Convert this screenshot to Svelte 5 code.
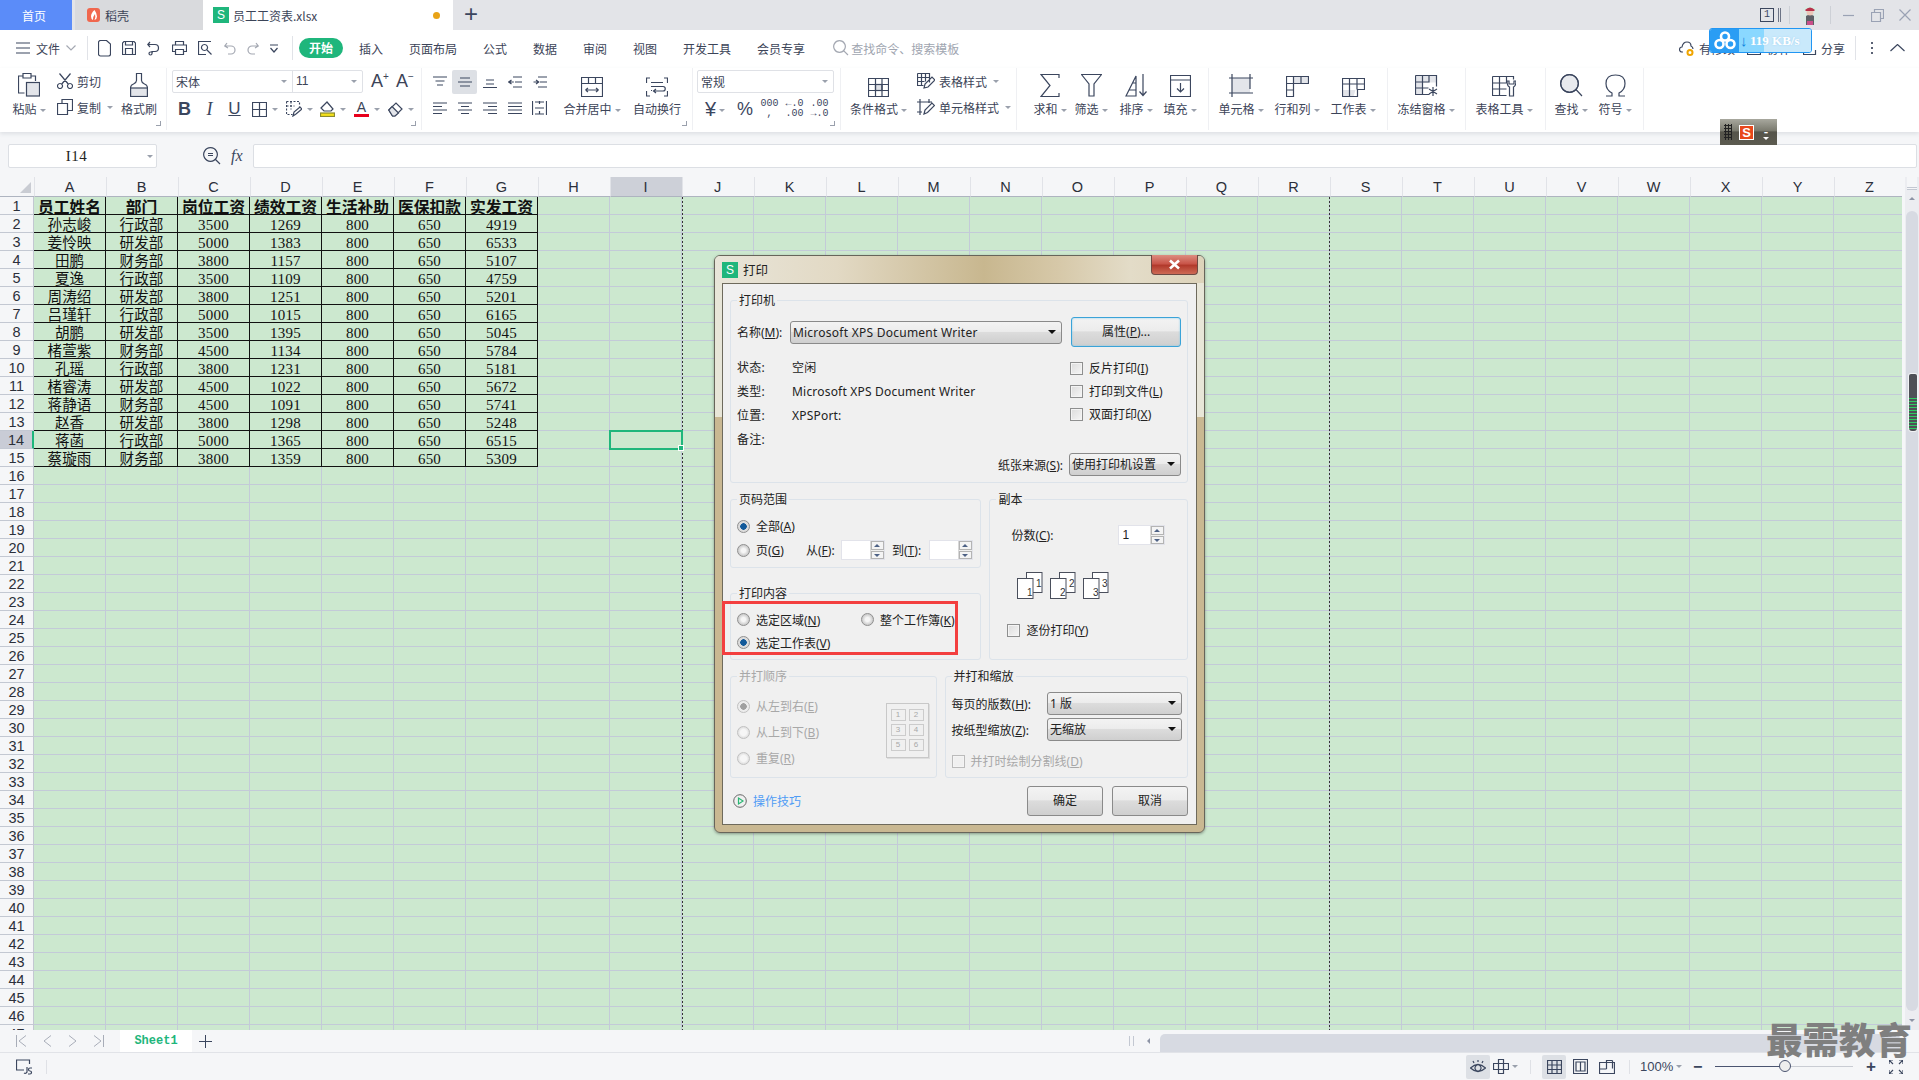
<script>
  const colLetters = 'ABCDEFGHIJKLMNOPQRSTUVWXYZ'.split('');
  const head = ['员工姓名', '部门', '岗位工资', '绩效工资', '生活补助', '医保扣款', '实发工资'];
  const people = [
    ['孙志峻', '行政部', 3500, 1269, 4919],
    ['姜怜映', '研发部', 5000, 1383, 6533],
    ['田鹏', '财务部', 3800, 1157, 5107],
    ['夏逸', '行政部', 3500, 1109, 4759],
    ['周涛绍', '研发部', 3800, 1251, 5201],
    ['吕瑾轩', '行政部', 5000, 1015, 6165],
    ['胡鹏', '研发部', 3500, 1395, 5045],
    ['楮萱紫', '财务部', 4500, 1134, 5784],
    ['孔瑶', '行政部', 3800, 1231, 5181],
    ['楮睿涛', '研发部', 4500, 1022, 5672],
    ['蒋静语', '财务部', 4500, 1091, 5741],
    ['赵香', '研发部', 3800, 1298, 5248],
    ['蒋菡', '行政部', 5000, 1365, 6515],
    ['蔡璇雨', '财务部', 3800, 1359, 5309]
  ];
  const rowNums = Array.from({ length: 47 }, (_, i) => i + 1);

  function cellAt(row, col) {
    if (row === 1 && col < 7) return head[col];
    const p = people[row - 2];
    if (!p || col > 6) return '';
    return [p[0], p[1], p[2], p[3], 800, 650, p[4]][col];
  }

  const icons = {
    menu: 'M0 1h14M0 6h14M0 11h14',
    chev: 'M.5.5 5 5l4.5-4.5',
    up: 'M.5 7 7.5.5 14.5 7',
    newdoc: 'M2.5.5h6l4 3.5v10a2 2 0 0 1-2 2h-8a2 2 0 0 1-2-2v-11.500a2 2 0 0 1 2-2z',
    save: 'M2 .5h10l1.500 1.500v11.500h-13v-11.500zM3.500.5v3.500h7v-3.500M3.500 13.500v-6h7v6',
    saveas: 'M1 3.500h7a3.500 3.500 0 0 1 0 7H5v2a1.500 1.500 0 1 1-1.500-1.500H6M3 1 .8 3.500 3 6',
    print: 'M3.500 4V.5h8V4M3.500 10.500h-3V4h14v6.500h-3M3.500 8.500h8v5h-8z',
    preview: 'M13 .5H.5v13H8M7 .5M6.500 3.500a3 3 0 1 0 .01 0M9 9l4.500 4.500',
    undo: 'M3 1 .8 4 4 6M1 4h6a4 4 0 0 1 0 8H4',
    redo: 'M9 1l2.200 3L8 6M11 4H5a4 4 0 0 0 0 8h3',
    more: 'M0 1h8M.5 4 4 8l3.500-4',
    search: 'M6.500.7a5.800 5.800 0 1 0 .01 0M10.800 10.800 15 15',
    cut: 'M4.800 11 13.500.5M11.200 11 2.500.5M3 10.500a2.500 2.500 0 1 0 .01 0M13 10.500a2.500 2.500 0 1 0 .01 0',
    copy: 'M5 4V.5h10.500v11H11M.5 4.500h10v11H.5z',
    borders: 'M.5.5h14v14H.5zM7.500.5v14M.5 7.500h14',
    zoomf: 'M7.500.7a6.800 6.800 0 1 0 .01 0M12.500 12.500 17 17M5 6.500h5M5 8.500h5',
    merge: 'M.5.5h21v19H.5zM.5 6.500h21M7.500.5v6M14.500.5v6M4.500 13h13M4.500 13l2.500-2M4.500 13l2.500 2M17.500 13 15 11M17.500 13 15 15',
    wrap: 'M4 1H.5v5M18 1h3.500v5M4 19H.5v-5M18 19h3.500v-5M5 5.500h12M5 9.500h12a2 2 0 0 1 0 4.500H8M10 12l-2.500 2 2.500 2M5 13.500h1',
    indL: 'M14 1H5M14 6h-7M14 11H5M3.500 4 .8 6l2.700 2M.8 6h5',
    indR: 'M14 1H5M14 6h-7M14 11H5M3 4l2.700 2L3 8M.5 6h5',
    distV: 'M.5 0v14M14.500 0v14M3 1h9M3 7h9M3 13h9M7.500 0v3M7.500 10v3',
    sum: 'M19 4V.5H1l9 11-9 11h18V19',
    filter: 'M.5.5h20L13 10v12H8V10z',
    sort: 'M1 22 11 2v20zM4 16h7M7 9h4M18 0v21M14.500 17.500 18 21.500 21.500 17.500',
    fill: 'M.5.5h20v21H.5zM.5 5h20M10.500 8v9M7 13.500 10.500 17 14 13.500',
    cells: 'M0 4h24M0 19h24M3 0v23M21 0v15',
    rowcol: 'M.5.5h22v7H.5zM.5 7.500v13h7v-20M7.500.5v7M15 .5v7M.5 14h7',
    sheet: 'M.5.5h22v11h-7v7h-15zM.5 6h22M7.500.5v18M15 .5v11',
    freeze: 'M.5.5h21v11M.5.5v19h14M.5 7h13M.5 13h13M7.500.5v19M14 .5v7M18 12v9M14 14l8 5M22 14l-8 5',
    tools: 'M.5.5h21v3M.5.5v19h14M.5 7h14M.5 13h14M7.500.5v19M14.500.5v6M15 5q0 5 2.500 6v9h4v-9q2.500-1 2.500-6l-2 0v3h-5V5z',
    find: 'M9.500.7a8.800 8.800 0 1 0 .01 0M15.500 15 22 22',
    omega: 'M1 22h6v-3Q1 16 1 9.500 1 1 10.500 1T20 9.500Q20 16 14 19v3h6',
    clip: 'M5 3H.5v17h6M5 .5h8V5H5zM13 3h4.500v5',
    cond: 'M.5.5h20v18H.5zM.5 6.500h20M.5 12.500h20M7.500.5v18M14 .5v18',
    tstyle: 'M.5.5h12v9M.5.5v12h6M.5 4.500h12M.5 8.500h7M4.500.5v12M8.500.5v8M7 15l1-4 7-7 3 3-7 7z',
    cstyle: 'M0 3h15M3 0v16M12 0v4M7 15l1-4 7-7 2.500 2.500-7 7zM0 13h5'
  };
</script>

{#snippet ic(name, w, h, cls = '')}
  <svg class="ic {cls}" width={w} height={h} viewBox="0 0 {w} {h}"><path d={icons[name]} /></svg>
{/snippet}

{#snippet lines(d, w = 14, h = 12)}
  <svg class="ic" width={w} height={h} viewBox="0 0 {w} {h}"><path d={d} /></svg>
{/snippet}

{#snippet big(name, w, h, label, width, caret = true)}
  <div class="big w{width}">
    <div class="bigicon">{@render ic(name, w, h)}</div>
    <div class="biglabel">{label}{#if caret}<i class="caret"></i>{/if}</div>
  </div>
{/snippet}

{#snippet corner()}
  <span class="launcher"></span>
{/snippet}

{#snippet radio(on = false, off = false)}
  <span class="radio" class:on class:off></span>
{/snippet}

{#snippet check(off = false)}
  <span class="check" class:off></span>
{/snippet}

{#snippet spin(v = '')}
  <span class="spin"><span class="spinval">{v}</span><span class="spinbtns"><b class="su"></b><b class="sd"></b></span></span>
{/snippet}

{#snippet pages(n)}
  <svg class="pages" width="26" height="27" viewBox="0 0 26 27">
    <rect x="9.500" y=".5" width="15.500" height="20" />
    <rect x=".5" y="6.500" width="15.500" height="20" />
    <text x="19" y="15">{n}</text>
    <text x="10" y="24">{n}</text>
  </svg>
{/snippet}

<div class="app">
  <header class="tabbar">
    <div class="tab home">首页</div>
    <div class="tab docer">
      <svg width="13" height="14" viewBox="0 0 13 14"><rect width="13" height="14" rx="3" fill="#f0674e" /><path d="M7.500 2Q4 5 4 8.500 4 11 6 12q-.5-3 2-6 1 3-.5 6 2.500-1 2.500-3.500 0-3-2.500-6.500z" fill="#fff" /></svg>
      <span>稻壳</span>
    </div>
    <div class="tab active">
      <span class="sicon">S</span>
      <span class="fname">员工工资表.xlsx</span>
      <span class="dot"></span>
    </div>
    <div class="addtab">+</div>
    <div class="winctl">
      <span class="pagecount"><em>1</em></span>
      <span class="wsep"></span>
      <svg class="avatar" width="20" height="20" viewBox="0 0 20 20">
        <circle cx="10" cy="10" r="10" fill="#dbe9e4" />
        <path d="M6 20V11q4-3 8 0v9z" fill="#5d6166" />
        <circle cx="10" cy="7" r="3.500" fill="#e8c9b8" />
        <path d="M5 5q5-5 10 0l-1 1H6z" fill="#b8324a" />
        <path d="M7 20v-4h6v4z" fill="#c94f8a" />
      </svg>
      <span class="wsep s2"></span>
      <svg class="wc" width="11" height="11" viewBox="0 0 11 11"><path d="M0 5.500h11" /></svg>
      <svg class="wc gap1" width="13" height="13" viewBox="0 0 13 13"><path d="M.5 3.500h9v9h-9zM3.500 3.500v-3h9v9h-3" /></svg>
      <svg class="wc gap2" width="12" height="12" viewBox="0 0 12 12"><path d="M.5.5l11 11M11.500.5l-11 11" /></svg>
    </div>
  </header>

  <nav class="menubar">
    <div class="filemenu">
      {@render ic('menu', 14, 12)}
      <span>文件</span>
      {@render ic('chev', 10, 6, 'soft')}
    </div>
    <span class="msep"></span>
    <div class="quick">
      {@render ic('newdoc', 13, 17)}
      {@render ic('save', 14, 14)}
      {@render ic('saveas', 14, 15)}
      {@render ic('print', 15, 14)}
      {@render ic('preview', 15, 14)}
      {@render ic('undo', 12, 13, 'soft')}
      {@render ic('redo', 12, 13, 'soft')}
      {@render ic('more', 8, 9)}
    </div>
    <span class="msep"></span>
    <div class="pill">开始</div>
    <div class="mitems">
      <span>插入</span><span>页面布局</span><span>公式</span><span>数据</span><span>审阅</span><span>视图</span><span>开发工具</span><span>会员专享</span>
    </div>
    <div class="msearch">{@render ic('search', 16, 16, 'soft')}<span>查找命令、搜索模板</span></div>
    <div class="mright">
      <svg class="ic" width="15" height="15" viewBox="0 0 15 15"><path d="M4 11H3a2.500 2.500 0 0 1 0-5q1-5 5-5t4 4q2 1 2 3" /><circle cx="11" cy="11.500" r="2.500" stroke="#f0a500" stroke-width="2" /></svg>
      <span class="mr1">有修改</span>
      <svg class="ic mr2" width="14" height="14" viewBox="0 0 14 14"><path d="M.5 4v9.500h13V7" /></svg>
      <span class="mr3">协作</span>
      <svg class="ic mr4" width="14" height="14" viewBox="0 0 14 14"><path d="M.5 4v9.500h12V9" /></svg>
      <span class="mr5">分享</span>
      <span class="msep mr6"></span>
      <span class="vdots"><b></b><b></b><b></b></span>
      {@render ic('up', 15, 8)}
    </div>
  </nav>

  <section class="ribbon">
    <div class="group g1">
      <div class="big w40">
        <div class="bigicon">
          <svg class="ic" width="22" height="24" viewBox="0 0 22 24"><path d={icons.clip} /><rect x="8.500" y="9.500" width="13" height="13.500" fill="#e3e5ea" /></svg>
        </div>
        <div class="biglabel">粘贴<i class="caret"></i></div>
      </div>
      <div class="smalls s55">
        <div class="small">{@render ic('cut', 16, 16)}<span>剪切</span></div>
        <div class="small">{@render ic('copy', 16, 16)}<span>复制</span><i class="caret"></i></div>
      </div>
      <div class="big w36">
        <div class="bigicon">
          <svg class="ic" width="18" height="24" viewBox="0 0 18 24"><rect x=".5" y="15" width="17" height="8.500" fill="#e3e5ea" /><path d="M6.500.5h5v7q0 2 3 3.500 3 1 3 4v8.500H.5V15q0-3 3-4 3-1.500 3-3.500z" /></svg>
        </div>
        <div class="biglabel">格式刷</div>
      </div>
      {@render corner()}
    </div>

    <div class="group g2">
      <div class="fontcol">
        <div class="rrow">
          <div class="combo fontbox">
            <span class="cf">宋体<i class="caret"></i></span>
            <span class="cs">11<i class="caret"></i></span>
          </div>
          <span class="growa">A<sup>+</sup></span>
          <span class="growa">A<sup>−</sup></span>
        </div>
        <div class="rrow fmt">
          <span class="fb bold">B</span>
          <span class="fb ital">I</span>
          <span class="fb under">U</span>
          <span class="fc">{@render ic('borders', 15, 15)}<i class="caret"></i></span>
          <span class="fc">
            <svg class="ic" width="16" height="16" viewBox="0 0 16 16"><path d="M.5.5h13v5M.5.5v13h6M.5 5h8M5 .5v8" stroke-dasharray="2 1.500" /><path d="M7 15l1-4 6-5 2 2-6 5z" /></svg>
            <i class="caret"></i>
          </span>
          <span class="fc">
            <svg class="ic" width="15" height="16" viewBox="0 0 15 16"><rect x=".5" y="12" width="14" height="3.500" fill="#f5e11b" stroke="#8a8a30" /><path d="M1 7l6-6 6 7-2 2H4z" /></svg>
            <i class="caret"></i>
          </span>
          <span class="fc">
            <span class="fontcolor">A</span>
            <i class="caret"></i>
          </span>
          <span class="fc">
            <svg class="ic" width="15" height="15" viewBox="0 0 15 15"><path d="M.8 8 8 1l6 6-7 7H4.500z" /><path d="M4 4.500l6.500 6.500L7 14H4.500L.8 8z" fill="#e3e5ea" /></svg>
            <i class="caret"></i>
          </span>
        </div>
      </div>
      {@render corner()}
    </div>

    <div class="group g3">
      <div class="aligns">
        <span class="al">{@render lines('M0 1h14M2.500 5h9M4 9h6')}</span>
        <span class="al sel">{@render lines('M2 3h10M0 7h14M2 11h10', 14, 14)}</span>
        <span class="al">{@render lines('M3 4h8M3 8h8M0 11.500h14')}</span>
        <span class="al">{@render ic('indL', 14, 12)}</span>
        <span class="al">{@render ic('indR', 14, 12)}</span>
        <span class="al">{@render lines('M0 1h14M0 4.500h9M0 8h14M0 11.500h9')}</span>
        <span class="al">{@render lines('M0 1h14M3 4.500h8M0 8h14M3 11.500h8')}</span>
        <span class="al">{@render lines('M0 1h14M5 4.500h9M0 8h14M5 11.500h9')}</span>
        <span class="al">{@render lines('M0 1h14M0 4.500h14M0 8h14M0 11.500h14')}</span>
        <span class="al">{@render ic('distV', 15, 14)}</span>
      </div>
      <div class="big w56 ml12">
        <div class="bigicon">{@render ic('merge', 22, 20)}</div>
        <div class="biglabel">合并居中<i class="caret"></i></div>
      </div>
      <div class="big w60 ml7">
        <div class="bigicon">{@render ic('wrap', 22, 20)}</div>
        <div class="biglabel">自动换行</div>
      </div>
      {@render corner()}
    </div>

    <div class="group g4">
      <div class="numcol">
        <div class="combo numbox"><span class="cf">常规<i class="caret"></i></span></div>
        <div class="rrow numfmt">
          <span class="nf yen">¥<i class="caret"></i></span>
          <span class="nf pct">%</span>
          <span class="nf tiny">000<br />,</span>
          <span class="nf tiny">←.0<br />.00</span>
          <span class="nf tiny">.00<br />→.0</span>
        </div>
      </div>
      {@render corner()}
    </div>

    <div class="group g5">
      <div class="big w57">
        <div class="bigicon">
          <svg class="ic" width="21" height="19" viewBox="0 0 21 19"><rect x="7.500" y="6.500" width="6.500" height="6" fill="#dfe1e6" /><path d={icons.cond} /></svg>
        </div>
        <div class="biglabel">条件格式<i class="caret"></i></div>
      </div>
      <div class="smalls s80">
        <div class="small">{@render ic('tstyle', 18, 16)}<span>表格样式</span><i class="caret"></i></div>
        <div class="small">{@render ic('cstyle', 18, 16)}<span>单元格样式</span><i class="caret"></i></div>
      </div>
    </div>

    <div class="group g6">
      {@render big('sum', 20, 23, '求和', 46)}
      {@render big('filter', 21, 23, '筛选', 36)}
      {@render big('sort', 23, 23, '排序', 54)}
      {@render big('fill', 21, 22, '填充', 34)}
    </div>

    <div class="group g7">
      <div class="big w56">
        <div class="bigicon">
          <svg class="ic" width="24" height="23" viewBox="0 0 24 23"><rect x="3" y="4" width="18" height="15" fill="#e3e5ea" stroke="none" /><path d={icons.cells} /></svg>
        </div>
        <div class="biglabel">单元格<i class="caret"></i></div>
      </div>
      <div class="big w56">
        <div class="bigicon">
          <svg class="ic" width="23" height="21" viewBox="0 0 23 21"><rect x="7.500" y=".5" width="15" height="7" fill="#e3e5ea" stroke="none" /><path d={icons.rowcol} /></svg>
        </div>
        <div class="biglabel">行和列<i class="caret"></i></div>
      </div>
      <div class="big w56">
        <div class="bigicon">
          <svg class="ic" width="23" height="19" viewBox="0 0 23 19"><path d="M.5 12h13l-2 6.500h-11z" fill="#e3e5ea" stroke="none" /><path d={icons.sheet} /></svg>
        </div>
        <div class="biglabel">工作表<i class="caret"></i></div>
      </div>
    </div>

    <div class="group g8">
      <div class="big w60">
        <div class="bigicon">
          <svg class="ic" width="23" height="22" viewBox="0 0 23 22"><path d="M.5.5h21v7h-14v12h-7z" fill="#e3e5ea" stroke="none" /><path d={icons.freeze} /></svg>
        </div>
        <div class="biglabel">冻结窗格<i class="caret"></i></div>
      </div>
    </div>

    <div class="group g9">
      {@render big('tools', 24, 21, '表格工具', 60)}
    </div>

    <div class="group g10">
      <div class="big w44">
        <div class="bigicon">
          <svg class="ic" width="23" height="23" viewBox="0 0 23 23"><circle cx="9.500" cy="9.500" r="8.800" fill="#e8eaee" /><path d={icons.find} /></svg>
        </div>
        <div class="biglabel">查找<i class="caret"></i></div>
      </div>
      {@render big('omega', 21, 23, '符号', 44)}
    </div>
  </section>

  <div class="formula">
    <div class="namebox">I14<i class="caret"></i></div>
    <div class="fxicons">
      {@render ic('zoomf', 18, 18)}
      <span class="fx">fx</span>
    </div>
    <div class="fxinput"></div>
  </div>

  <main class="sheetwrap">
    <div class="sheetclip">
      <div class="sheet">
        <div class="corner"><span></span></div>
        {#each colLetters as c}
          <div class="colh" class:cursel={c === 'I'}>{c}</div>
        {/each}
        {#each rowNums as r}
          <div class="rowh" class:cursel={r === 14}>{r}</div>
          {#each colLetters as c, i}
            <div
              class="cell"
              class:data={r <= 15 && i < 7}
              class:title={r === 1 && i < 7}
              class:num={r > 1 && i >= 2 && i < 7}
            >{cellAt(r, i)}</div>
          {/each}
        {/each}
      </div>
      <div class="pagebreak pb1"></div>
      <div class="pagebreak pb2"></div>
      <div class="cursor"><span></span></div>
    </div>
    <aside class="vscroll">
      <span class="split"></span>
      <i class="arrow-up"></i>
      <div class="vthumb"><div class="dlbar"></div></div>
      <i class="arrow-down"></i>
    </aside>
  </main>

  <div class="sheettabs">
    <div class="navs">
      <svg width="11" height="12" viewBox="0 0 11 12"><path d="M.5 0v12M10 .5 3 6l7 5.500" /></svg>
      <svg width="9" height="12" viewBox="0 0 9 12"><path d="M8 .5 1 6l7 5.500" /></svg>
      <svg width="9" height="12" viewBox="0 0 9 12"><path d="M1 .5 8 6l-7 5.500" /></svg>
      <svg width="11" height="12" viewBox="0 0 11 12"><path d="M10.500 0v12M1 .5 8 6l-7 5.500" /></svg>
    </div>
    <div class="stab">Sheet1</div>
    <div class="addsheet">
      <svg width="13" height="13" viewBox="0 0 13 13"><path d="M6.500 0v13M0 6.500h13" /></svg>
    </div>
    <div class="hscroll">
      <span class="hsplit"></span>
      <i class="arrow-left"></i>
      <div class="hthumb"></div>
    </div>
  </div>

  <footer class="statusbar">
    <div class="macro">
      <svg class="ic" width="17" height="16" viewBox="0 0 17 16"><path d="M8 11H.5V1h13v4M11 8v5a2 2 0 0 1-3 1M16 9h-2a1 1 0 0 0 0 3 1 1 0 0 1 0 3h-2" /></svg>
    </div>
    <span class="ssep"></span>
    <div class="sright">
      <span class="sbox">
        <svg class="ic" width="16" height="14" viewBox="0 0 16 14"><path d="M.5 8Q8 1 15.500 8 8 15 .5 8zM8 5a3 3 0 1 0 .01 0M8 0v2M3 1l1 2M13 1l-1 2" /></svg>
      </span>
      <svg class="ic cross" width="16" height="15" viewBox="0 0 16 15"><path d="M5.500.5h5v4h5v6h-5v4h-5v-4h-5v-6h5zM5.500 4.500h5v6h-5z" /></svg>
      <i class="caret"></i>
      <span class="ssep s3"></span>
      <span class="sbox v1">
        <svg class="ic" width="15" height="14" viewBox="0 0 15 14"><path d="M.5.5h14v13H.5zM.5 5h14M.5 9.500h14M5 .5v13M10 .5v13" /></svg>
      </span>
      <svg class="ic v2" width="15" height="15" viewBox="0 0 15 15"><path d="M.5.5h14v14H.5zM3 3h9v9H3zM7.500 3v9" /></svg>
      <svg class="ic v3" width="16" height="14" viewBox="0 0 16 14"><path d="M.5 2.500h15v11H.5zM7.500 9V.5h6M7.500 9H.5M13.500.5v8" /></svg>
      <span class="ssep s4"></span>
      <span class="zoompct">100%</span><i class="caret"></i>
      <span class="zm">−</span>
      <div class="slider"><span class="knob"></span></div>
      <span class="zp">+</span>
      <svg class="ic fs" width="14" height="14" viewBox="0 0 14 14"><path d="M0 4V0h4M0 0l4 4M10 0h4v4M14 0l-4 4M0 10v4h4M0 14l4-4M14 10v4h-4M14 14l-4-4" /></svg>
    </div>
  </footer>

  <div class="watermark">最需教育</div>

  <div class="netdisk">
    <div class="ndleft">
      <svg width="22" height="19" viewBox="0 0 22 19" fill="none" stroke="#fff" stroke-width="2.600"><circle cx="11" cy="5.500" r="4" /><circle cx="5.500" cy="13" r="4" /><circle cx="16.500" cy="13" r="4" /></svg>
    </div>
    <div class="ndprog"><span class="ndarrow">↓</span></div>
    <div class="ndrest"></div>
    <span class="ndtext">119 KB/s</span>
  </div>

  <div class="imebar">
    <span class="imegrip"></span>
    <span class="imes">S</span>
    <span class="imectl"><b>-</b><i></i></span>
  </div>

  <div class="dialog">
    <div class="dtitle">
      <span class="sicon">S</span>
      <span>打印</span>
      <div class="dclose">
        <svg width="13" height="11" viewBox="0 0 13 11"><path d="M2 1.500l9 8M11 1.500l-9 8" stroke="#fff" stroke-width="2.600" /></svg>
      </div>
    </div>
    <div class="client">
      <div class="gbox printer">
        <span class="legend">打印机</span>
        <div class="prow">
          <span class="lb1">名称(<u>M</u>):</span>
          <div class="select sname">Microsoft XPS Document Writer</div>
          <div class="btn focus">属性(<u>P</u>)...</div>
        </div>
        <div class="pinfo">
          <div class="kv">
            <span>状态:</span><span>空闲</span>
            <span>类型:</span><span>Microsoft XPS Document Writer</span>
            <span>位置:</span><span>XPSPort:</span>
            <span>备注:</span><span></span>
          </div>
          <div class="checks">
            <label>{@render check()}反片打印(<u>I</u>)</label>
            <label>{@render check()}打印到文件(<u>L</u>)</label>
            <label>{@render check()}双面打印(<u>X</u>)</label>
          </div>
        </div>
        <div class="psrc">
          <span>纸张来源(<u>S</u>):</span>
          <div class="select ssrc">使用打印机设置</div>
        </div>
      </div>

      <div class="mid">
        <div class="midleft">
          <div class="gbox range">
            <span class="legend">页码范围</span>
            <div class="opt">{@render radio(true)}<span>全部(<u>A</u>)</span></div>
            <div class="opt">
              {@render radio()}<span class="pageg">页(<u>G</u>)</span>
              <span class="from">从(<u>F</u>):</span>{@render spin()}
              <span class="to">到(<u>T</u>):</span>{@render spin()}
            </div>
          </div>
          <div class="gbox content">
            <span class="legend">打印内容</span>
            <div class="opt">
              {@render radio()}<span class="selarea">选定区域(<u>N</u>)</span>
              {@render radio()}<span>整个工作簿(<u>K</u>)</span>
            </div>
            <div class="opt">{@render radio(true)}<span>选定工作表(<u>V</u>)</span></div>
          </div>
        </div>
        <div class="gbox copies">
          <span class="legend">副本</span>
          <div class="copyrow"><span>份数(<u>C</u>):</span>{@render spin('1')}</div>
          <div class="collate">{@render pages(1)}{@render pages(2)}{@render pages(3)}</div>
          <label class="colcheck">{@render check()}逐份打印(<u>Y</u>)</label>
        </div>
      </div>

      <div class="low">
        <div class="gbox order dis">
          <span class="legend">并打顺序</span>
          <div class="orderopts">
            <div class="opt">{@render radio(true, true)}<span>从左到右(<u>E</u>)</span></div>
            <div class="opt">{@render radio(false, true)}<span>从上到下(<u>B</u>)</span></div>
            <div class="opt">{@render radio(false, true)}<span>重复(<u>R</u>)</span></div>
          </div>
          <div class="nup">
            <span>1</span><span>2</span><span>3</span><span>4</span><span>5</span><span>6</span>
          </div>
        </div>
        <div class="gbox scale">
          <span class="legend">并打和缩放</span>
          <div class="srow"><span>每页的版数(<u>H</u>):</span><div class="select s2col">1 版</div></div>
          <div class="srow"><span>按纸型缩放(<u>Z</u>):</span><div class="select s2col">无缩放</div></div>
          <label class="linecheck">{@render check(true)}并打时绘制分割线(<u>D</u>)</label>
        </div>
      </div>

      <div class="dfoot">
        <svg width="14" height="14" viewBox="0 0 14 14" fill="none"><circle cx="7" cy="7" r="6.300" stroke="#666" /><path d="M5.500 4v6L10 7z" stroke="#2bb673" stroke-width="1.200" /></svg>
        <span class="tips">操作技巧</span>
        <div class="btn ok">确定</div>
        <div class="btn cancel">取消</div>
      </div>

      <div class="redbox"></div>
    </div>
  </div>
</div>

<style>
  :global(body) {
    margin: 0;
    background: #f5f6f8;
  }

  .app {
    position: relative;
    width: 1919px;
    height: 1080px;
    overflow: hidden;
    display: flex;
    flex-direction: column;
    font-family: "Noto Sans CJK SC", "Noto Sans", sans-serif;
    font-size: 12px;
    color: #3c4458;
  }

  .ic {
    fill: none;
    stroke: #3b465e;
    stroke-width: 1.200;
    flex: none;
    display: block;
  }
  .ic.soft {
    stroke: #a4a8b2;
  }

  .caret {
    display: inline-block;
    width: 0;
    height: 0;
    border-left: 3px solid transparent;
    border-right: 3px solid transparent;
    border-top: 3px solid #9aa0ac;
    margin-left: 3px;
    vertical-align: middle;
  }

  /* top tab bar */
  .tabbar {
    height: 30px;
    flex: none;
    background: #e3e4e8;
    display: flex;
    align-items: stretch;
  }
  .tab {
    display: flex;
    align-items: center;
  }
  .home {
    width: 72px;
    background: #5b8cf9;
    color: #fff;
    justify-content: center;
    margin-right: 3px;
    padding-right: 4px;
    box-sizing: border-box;
  }
  .docer {
    width: 128px;
    background: #d9dadd;
    padding-left: 12px;
    box-sizing: border-box;
    gap: 5px;
  }
  .active {
    width: 250px;
    background: #fff;
    padding-left: 10px;
    box-sizing: border-box;
    position: relative;
  }
  .sicon {
    width: 16px;
    height: 16px;
    background: #1fb67c;
    color: #fff;
    font: 12px/16px "Liberation Sans", sans-serif;
    text-align: center;
    flex: none;
  }
  .fname {
    margin-left: 4px;
    flex: 1;
  }
  .dot {
    width: 7px;
    height: 7px;
    border-radius: 50%;
    background: #e8a317;
    margin-right: 13px;
  }
  .addtab {
    width: 36px;
    text-align: center;
    font: 300 24px/28px "Liberation Sans", sans-serif;
    color: #3b465e;
  }
  .winctl {
    margin-left: auto;
    display: flex;
    align-items: center;
    padding-right: 8px;
  }
  .pagecount {
    width: 21px;
    height: 14px;
    position: relative;
    margin-right: 8px;
    border-right: 3px double #6d7486;
    box-sizing: border-box;
    display: block;
  }
  .pagecount em {
    display: block;
    width: 14px;
    height: 14px;
    box-sizing: border-box;
    border: 1px solid #3b465e;
    font: normal 10px/12px "Liberation Mono", monospace;
    text-align: center;
    color: #3b465e;
  }
  .wsep {
    width: 1px;
    height: 18px;
    background: #cdd0d6;
  }
  .wsep.s2 {
    margin-right: 12px;
  }
  .avatar {
    margin: 0 10px;
    flex: none;
  }
  .wc {
    fill: none;
    stroke: #9aa2b4;
    stroke-width: 1.200;
  }
  .gap1 {
    margin-left: 17px;
  }
  .gap2 {
    margin-left: 15px;
  }

  /* menu row */
  .menubar {
    height: 38px;
    flex: none;
    background: #fff;
    display: flex;
    align-items: center;
    padding: 0 0 2px 16px;
    box-sizing: border-box;
  }
  .filemenu {
    display: flex;
    align-items: center;
    width: 71px;
    gap: 6px;
  }
  .msep {
    width: 1px;
    height: 24px;
    background: #e1e3e8;
    flex: none;
  }
  .quick {
    display: flex;
    align-items: center;
    width: 204px;
    box-sizing: border-box;
    padding-left: 10px;
    gap: 11px;
  }
  .pill {
    width: 44px;
    height: 20px;
    line-height: 20px;
    border-radius: 10px;
    background: #1fb67c;
    color: #fff;
    font-weight: 700;
    text-align: center;
    margin-left: 6px;
  }
  .mitems {
    display: flex;
    gap: 26px;
    margin-left: 16px;
  }
  .msearch {
    display: flex;
    align-items: center;
    margin-left: 28px;
    color: #a0a5b0;
    gap: 2px;
  }
  .mright {
    margin-left: auto;
    display: flex;
    align-items: center;
    padding-right: 14px;
  }
  .mr1 {
    margin-left: 5px;
  }
  .mr2 {
    margin-left: 12px;
  }
  .mr3 {
    margin-left: 6px;
  }
  .mr4 {
    margin-left: 12px;
  }
  .mr5 {
    margin-left: 4px;
  }
  .mr6 {
    margin: 0 15px 0 10px;
  }
  .vdots {
    display: flex;
    flex-direction: column;
    gap: 3px;
    margin-right: 17px;
  }
  .vdots b {
    width: 2px;
    height: 2px;
    background: #5a6274;
  }

  /* ribbon */
  .ribbon {
    height: 64px;
    flex: none;
    background: #fff;
    display: flex;
    box-sizing: border-box;
    box-shadow: 0 2px 4px rgba(60, 70, 90, 0.12);
    position: relative;
    z-index: 2;
  }
  .group {
    position: relative;
    display: flex;
    height: 62px;
    box-sizing: border-box;
    border-right: 1px solid #eff0f3;
    flex: none;
  }
  .g1 { width: 167px; padding-left: 9px; }
  .g2 { width: 255px; padding-left: 5px; }
  .g3 { width: 271px; padding-left: 5px; }
  .g4 { width: 148px; padding-left: 4px; }
  .g5 { width: 176px; padding-left: 9px; }
  .g6 { width: 192px; padding-left: 10px; }
  .g7 { width: 179px; padding-left: 4px; }
  .g8 { width: 78px; padding-left: 8px; }
  .g9 { width: 80px; padding-left: 8px; }
  .g10 { width: 98px; padding-left: 3px; }

  .launcher {
    position: absolute;
    right: 5px;
    bottom: 4px;
    width: 4px;
    height: 4px;
    border-right: 1px solid #9aa0ac;
    border-bottom: 1px solid #9aa0ac;
  }
  .big {
    display: flex;
    flex-direction: column;
    align-items: center;
    flex: none;
  }
  .w34 { width: 34px; }
  .w36 { width: 36px; }
  .g1 .w36 { margin-left: 8px; }
  .w40 { width: 40px; }
  .w44 { width: 44px; }
  .w46 { width: 46px; }
  .w54 { width: 54px; }
  .w56 { width: 56px; }
  .w57 { width: 57px; }
  .w60 { width: 60px; }
  .ml12 { margin-left: 12px; }
  .ml7 { margin-left: 7px; }
  .bigicon {
    height: 32px;
    display: flex;
    align-items: flex-end;
    padding-bottom: 3px;
    box-sizing: border-box;
  }
  .biglabel {
    white-space: nowrap;
    line-height: 18px;
  }
  .smalls {
    display: flex;
    flex-direction: column;
    gap: 10px;
    padding-top: 5px;
    margin-left: 8px;
  }
  .s80 {
    margin-left: 10px;
  }
  .small {
    display: flex;
    align-items: center;
    height: 16px;
    gap: 4px;
    white-space: nowrap;
  }
  .small .caret {
    margin-left: 2px;
  }
  .fontcol, .numcol {
    display: flex;
    flex-direction: column;
    padding-top: 2px;
  }
  .rrow {
    display: flex;
    align-items: center;
  }
  .combo {
    height: 23px;
    box-sizing: border-box;
    border: 1px solid #dfe1e6;
    border-radius: 2px;
    display: flex;
    font-size: 12px;
    line-height: 21px;
  }
  .fontbox {
    width: 191px;
  }
  .cf {
    flex: 1;
    padding-left: 3px;
    position: relative;
  }
  .cs {
    width: 70px;
    border-left: 1px solid #dfe1e6;
    padding-left: 3px;
    box-sizing: border-box;
    position: relative;
    font-family: "Liberation Sans", sans-serif;
  }
  .combo .caret {
    position: absolute;
    right: 5px;
    top: 9px;
  }
  .growa {
    font: 18px/23px "Liberation Sans", sans-serif;
    width: 24px;
    margin-left: 1px;
    padding-left: 7px;
    box-sizing: border-box;
    white-space: nowrap;
  }
  .growa sup {
    font-size: 10px;
    line-height: 0;
    vertical-align: 7px;
  }
  .fmt {
    height: 30px;
    margin-top: 1px;
  }
  .fb {
    width: 25px;
    text-align: center;
    font-size: 17px;
    color: #3b465e;
  }
  .bold {
    font: 700 18px "Liberation Sans", sans-serif;
  }
  .ital {
    font: italic 18px "Liberation Serif", serif;
  }
  .under {
    font: 17px "Liberation Sans", sans-serif;
    text-decoration: underline;
  }
  .fc {
    width: 34px;
    display: flex;
    align-items: center;
    padding-left: 5px;
    box-sizing: border-box;
  }
  .fc .caret {
    margin-left: 5px;
  }
  .fontcolor {
    width: 15px;
    text-align: center;
    font: 14px/13px "Liberation Sans", sans-serif;
    border-bottom: 3px solid #e8001c;
    box-sizing: content-box;
  }
  .aligns {
    display: grid;
    grid-template-columns: repeat(5, 25px);
    grid-auto-rows: 24px;
    row-gap: 2px;
    padding-top: 2px;
    width: 125px;
  }
  .al {
    display: flex;
    align-items: center;
    justify-content: center;
    border-radius: 2px;
  }
  .al.sel {
    background: #dde0e5;
  }
  .numbox {
    width: 137px;
  }
  .numfmt {
    height: 30px;
    margin-top: 1px;
    font-family: "Liberation Sans", sans-serif;
  }
  .nf {
    display: block;
    text-align: center;
    color: #3b465e;
  }
  .yen {
    width: 36px;
    font-size: 20px;
    line-height: 24px;
    white-space: nowrap;
  }
  .pct {
    width: 24px;
    font-size: 18px;
    line-height: 24px;
  }
  .tiny {
    width: 25px;
    font: 10px/10px "Liberation Mono", monospace;
  }

  /* formula bar */
  .formula {
    height: 45px;
    flex: none;
    display: flex;
    align-items: flex-start;
    padding: 12px 2px 0 8px;
    box-sizing: border-box;
    background: #f5f6f8;
  }
  .namebox {
    width: 149px;
    height: 24px;
    background: #fff;
    border: 1px solid #dcdfe4;
    border-radius: 2px;
    box-sizing: border-box;
    padding-right: 12px;
    font: 15px/23px "Liberation Serif", serif;
    letter-spacing: 0.5px;
    color: #222;
    text-align: center;
    position: relative;
  }
  .namebox .caret {
    position: absolute;
    right: 3px;
    top: 10px;
  }
  .fxicons {
    width: 96px;
    height: 24px;
    display: flex;
    align-items: center;
    padding-left: 46px;
    box-sizing: border-box;
    gap: 10px;
  }
  .fx {
    font: italic 16px "Liberation Serif", serif;
    color: #3b465e;
  }
  .fxinput {
    flex: 1;
    height: 24px;
    background: #fff;
    border: 1px solid #dcdfe4;
    border-radius: 2px;
    box-sizing: border-box;
  }

  /* sheet */
  .sheetwrap {
    height: 853px;
    flex: none;
    display: flex;
    background: #f5f6f8;
  }
  .sheetclip {
    width: 1902px;
    position: relative;
    overflow: hidden;
    flex: none;
  }
  .sheet {
    display: grid;
    grid-template-columns: 34px repeat(26, 72px);
    grid-template-rows: 20px repeat(47, 18px);
    width: 1906px;
    font-family: "Noto Sans CJK SC", sans-serif;
  }
  .corner {
    border-bottom: 1px solid #aeb4c0;
    box-sizing: border-box;
    position: relative;
  }
  .corner span {
    position: absolute;
    right: 3px;
    bottom: 3px;
    border-left: 11px solid transparent;
    border-bottom: 11px solid #c9ccd3;
  }
  .colh {
    font: 14.500px/20px "Liberation Sans", sans-serif;
    text-align: center;
    color: #2b2f3a;
    border-left: 1px solid #e1e3e8;
    border-bottom: 1px solid #aeb4c0;
    box-sizing: border-box;
    background: #f5f6f8;
    padding-right: 2px;
  }
  .colh.cursel {
    background: #cdd0d8;
  }
  .rowh {
    font: 14.500px/19px "Liberation Sans", sans-serif;
    text-align: center;
    color: #2b2f3a;
    background: #f5f6f8;
    border-bottom: 1px solid #c3c8d2;
    border-right: 1px solid #c3c8d2;
    box-sizing: border-box;
  }
  .rowh.cursel {
    background: #c9ccd6;
    border-right: 2px solid #1fb67c;
  }
  .cell {
    background: #cce8cf;
    box-sizing: border-box;
    border-right: 1px solid #c3cad8;
    border-bottom: 1px solid #c3cad8;
    color: #111;
    text-align: center;
    font-size: 14.600px;
    line-height: 18px;
    white-space: nowrap;
  }
  .cell.data {
    border-right-color: #111;
    border-bottom-color: #111;
  }
  .cell.title {
    font-weight: 700;
    font-size: 15.800px;
    line-height: 19px;
  }
  .cell.num {
    font-family: "Liberation Serif", serif;
    font-size: 15px;
    line-height: 20px;
    letter-spacing: 0.2px;
  }
  .pagebreak {
    position: absolute;
    top: 20px;
    bottom: 0;
    width: 1px;
    background: repeating-linear-gradient(#333 0 2px, transparent 2px 4px);
  }
  .pb1 {
    left: 682px;
  }
  .pb2 {
    left: 1329px;
  }
  .cursor {
    position: absolute;
    left: 609px;
    top: 253px;
    width: 74px;
    height: 20px;
    border: 2px solid #1fb67c;
    box-sizing: border-box;
  }
  .cursor span {
    position: absolute;
    right: -3px;
    bottom: -3px;
    width: 4px;
    height: 4px;
    background: #1fb67c;
    border: 1px solid #fff;
  }
  .vscroll {
    margin-left: 3px;
    width: 14px;
    background: #ecedf1;
    position: relative;
    display: flex;
    flex-direction: column;
    align-items: center;
  }
  .split {
    position: absolute;
    top: 0;
    left: 0;
    right: 0;
    height: 13px;
    background: #f5f6f8;
    border-bottom: 3px double #c3c8d2;
    box-sizing: border-box;
    width: 10px;
    margin-left: 2px;
  }
  .arrow-up, .arrow-down {
    border-left: 3px solid transparent;
    border-right: 3px solid transparent;
    position: absolute;
  }
  .arrow-up {
    top: 20px;
    border-bottom: 3px solid #8d94a6;
  }
  .arrow-down {
    bottom: 8px;
    border-top: 3px solid #8d94a6;
  }
  .vthumb {
    margin-top: 34px;
    width: 12px;
    height: 800px;
    background: #d7dae2;
    border-radius: 6px;
    position: relative;
  }
  .dlbar {
    position: absolute;
    top: 163px;
    left: 3px;
    width: 8px;
    height: 57px;
    border-radius: 2px 2px 3px 3px;
    background: repeating-linear-gradient(#2ecc61 0 1px, #4e5056 1px 3px) 0 24px / 100% 100% no-repeat, #4e5056;
    box-shadow: 0 0 0 1px #f2f3f5;
  }

  /* sheet tabs */
  .sheettabs {
    height: 22px;
    flex: none;
    background: #f5f6f8;
    display: flex;
    align-items: stretch;
    border-bottom: 1px solid #e1e3e8;
    box-sizing: content-box;
  }
  .navs {
    width: 120px;
    display: flex;
    align-items: center;
    padding-left: 16px;
    box-sizing: border-box;
    gap: 16px;
  }
  .navs svg {
    fill: none;
    stroke: #a8adb8;
  }
  .stab {
    width: 72px;
    background: #fff;
    color: #1fb67c;
    font: 700 12px/23px "Liberation Mono", monospace;
    text-align: center;
  }
  .addsheet {
    width: 26px;
    display: flex;
    align-items: center;
    justify-content: center;
  }
  .addsheet svg {
    fill: none;
    stroke: #3b465e;
  }
  .hscroll {
    flex: 1;
    position: relative;
    display: flex;
    align-items: center;
  }
  .hsplit {
    position: absolute;
    left: 911px;
    width: 3px;
    height: 10px;
    border-left: 1px solid #c3c8d2;
    border-right: 1px solid #c3c8d2;
  }
  .arrow-left {
    position: absolute;
    left: 929px;
    border-top: 3px solid transparent;
    border-bottom: 3px solid transparent;
    border-right: 3px solid #8d94a6;
  }
  .hthumb {
    position: absolute;
    left: 942px;
    right: 19px;
    top: 4px;
    bottom: 0;
    background: #d7dae2;
    border-radius: 5px 5px 0 0;
  }

  /* status bar */
  .statusbar {
    flex: 1;
    background: #f5f6f8;
    display: flex;
    align-items: center;
    padding-left: 16px;
  }
  .macro {
    width: 30px;
  }
  .ssep {
    width: 1px;
    height: 14px;
    background: #dfe1e6;
    flex: none;
  }
  .sright {
    margin-left: auto;
    display: flex;
    align-items: center;
    padding-right: 16px;
    color: #3b465e;
  }
  .sbox {
    width: 24px;
    height: 24px;
    background: #dde0e5;
    border-radius: 2px;
    display: flex;
    align-items: center;
    justify-content: center;
  }
  .cross {
    margin-left: 3px;
  }
  .s3 {
    margin: 0 11px 0 12px;
  }
  .v2 {
    margin-left: 7px;
  }
  .v3 {
    margin-left: 11px;
  }
  .s4 {
    margin: 0 10px 0 14px;
  }
  .zoompct {
    font: 13px "Liberation Sans", sans-serif;
    width: 33px;
  }
  .zm {
    font: 700 16px "Liberation Sans", sans-serif;
    margin-left: 11px;
    width: 12px;
  }
  .slider {
    width: 138px;
    height: 1px;
    margin-left: 10px;
    background: linear-gradient(90deg, #4a5470 50%, #c9ccd3 50%);
    position: relative;
  }
  .knob {
    position: absolute;
    left: 64px;
    top: -6px;
    width: 10px;
    height: 10px;
    border-radius: 50%;
    border: 1px solid #4a5470;
    background: #eee;
  }
  .zp {
    font: 700 17px "Liberation Sans", sans-serif;
    margin-left: 13px;
    width: 14px;
  }
  .fs {
    margin-left: 9px;
  }

  /* floating overlays */
  .watermark {
    position: absolute;
    left: 1766px;
    top: 1016px;
    font-size: 36.500px;
    font-weight: 900;
    line-height: 46px;
    color: #7f7f7f;
    white-space: nowrap;
    z-index: 5;
  }
  .netdisk {
    position: absolute;
    left: 1709px;
    top: 28px;
    width: 103px;
    height: 25px;
    border: 1px solid #2196f3;
    border-radius: 3px;
    box-sizing: border-box;
    display: flex;
    overflow: hidden;
    z-index: 5;
  }
  .ndleft {
    width: 29px;
    background: #2a9df4;
    display: flex;
    align-items: center;
    justify-content: center;
  }
  .ndprog {
    width: 25px;
    background: #8ad8ff;
  }
  .ndarrow {
    color: #0d86e0;
    font: 700 15px/23px "Liberation Sans", sans-serif;
    margin-left: 1px;
  }
  .ndrest {
    flex: 1;
    background: #c9e9fb;
  }
  .ndtext {
    position: absolute;
    left: 40px;
    top: 3px;
    color: #fff;
    font: 700 13px/17px "Liberation Serif", serif;
    text-shadow: 0 0 2px #9fd0f0;
    white-space: nowrap;
  }
  .imebar {
    position: absolute;
    left: 1720px;
    top: 119px;
    width: 57px;
    height: 26px;
    background: linear-gradient(#a8a89e, #7a7a6e 45%, #55544a 50%, #5c5b50);
    display: flex;
    align-items: center;
    z-index: 5;
  }
  .imegrip {
    width: 8px;
    height: 16px;
    margin-left: 4px;
    background-image: radial-gradient(#222 1px, transparent 1.200px);
    background-size: 3px 3px;
  }
  .imes {
    width: 15px;
    height: 15px;
    margin-left: 7px;
    background: #e8481c;
    border: 1px solid #fff;
    box-sizing: border-box;
    color: #fff;
    font: 700 13px/13px "Liberation Sans", sans-serif;
    text-align: center;
  }
  .imectl {
    margin-left: 9px;
    display: flex;
    flex-direction: column;
    align-items: center;
    color: #fff;
    line-height: 12px;
  }
  .imectl i {
    border-left: 3px solid transparent;
    border-right: 3px solid transparent;
    border-top: 3px solid #fff;
  }

  /* print dialog */
  .dialog {
    position: absolute;
    left: 714px;
    top: 255px;
    width: 491px;
    height: 578px;
    box-sizing: border-box;
    border: 1px solid #67655a;
    border-radius: 6px;
    padding: 0 7px 7px;
    background: linear-gradient(#e8e6d8 0 28%, #c9b892 28% 100%);
    box-shadow: 0 1px 3px rgba(0, 0, 0, 0.35);
    display: flex;
    flex-direction: column;
    color: #222;
    z-index: 4;
    font-family: "Noto Sans", "Noto Sans CJK SC", sans-serif;
    font-size: 12px;
  }
  .dtitle {
    height: 27px;
    flex: none;
    margin: 0 -7px;
    padding: 0 7px;
    display: flex;
    align-items: center;
    gap: 5px;
    position: relative;
    background: linear-gradient(90deg, #e8e5d9 0, #e2d9c4 25%, #c8b78f 55%, #d6c8a8 70%, #e3dcc8 85%, #ddd3ba 100%);
    border-radius: 5px 5px 0 0;
    font-size: 12.500px;
  }
  .dclose {
    position: absolute;
    right: 6px;
    top: -1px;
    width: 47px;
    height: 20px;
    box-sizing: border-box;
    border: 1px solid #6d4a44;
    border-top: none;
    border-radius: 0 0 4px 4px;
    background: linear-gradient(#dc8d80, #c9564a 45%, #b23a2c 55%, #cd6a55);
    display: flex;
    align-items: center;
    justify-content: center;
  }
  .client {
    flex: 1;
    position: relative;
    background: #f0f0f0;
    border: 1px solid #6e6a5c;
    padding: 16px 8px 0 7px;
    display: flex;
    flex-direction: column;
    box-sizing: border-box;
  }
  .gbox {
    position: relative;
    border: 1px solid #dce3ea;
    border-radius: 3px;
    box-sizing: border-box;
  }
  .legend {
    position: absolute;
    left: 6px;
    top: -9px;
    background: #f0f0f0;
    padding: 0 2px;
    line-height: 18px;
  }
  u {
    text-underline-offset: 1px;
  }
  .printer {
    height: 183px;
    padding: 16px 6px 0 6px;
    flex: none;
  }
  .prow {
    display: flex;
    align-items: center;
    height: 30px;
  }
  .lb1 {
    width: 53px;
  }
  .select {
    height: 23px;
    box-sizing: border-box;
    border: 1px solid #8a8a8a;
    border-radius: 3px;
    background: linear-gradient(#f3f3f3 0, #ececec 45%, #dcdcdc 50%, #cfcfcf 100%);
    line-height: 21px;
    padding-left: 2px;
    position: relative;
    white-space: nowrap;
  }
  .select::after {
    content: "";
    position: absolute;
    right: 5px;
    top: 8px;
    border-left: 4px solid transparent;
    border-right: 4px solid transparent;
    border-top: 4px solid #111;
  }
  .sname {
    width: 273px;
    letter-spacing: 0.25px;
  }
  .btn {
    box-sizing: border-box;
    border: 1px solid #8a8a8a;
    border-radius: 3px;
    background: linear-gradient(#f3f3f3 0, #ececec 45%, #dcdcdc 50%, #cfcfcf 100%);
    text-align: center;
  }
  .btn.focus {
    width: 110px;
    height: 30px;
    line-height: 28px;
    margin-left: 9px;
    border: 1px solid #3aa3d8;
    box-shadow: inset 0 0 2px #7cc8ec;
  }
  .pinfo {
    display: flex;
    justify-content: space-between;
    margin-top: 9px;
  }
  .kv {
    display: grid;
    grid-template-columns: 55px auto;
    grid-auto-rows: 24px;
    line-height: 24px;
    color: #222;
    letter-spacing: 0.2px;
  }
  .checks {
    display: flex;
    flex-direction: column;
    gap: 5px;
    width: 111px;
    padding-top: 3px;
  }
  label {
    display: flex;
    align-items: center;
    height: 18px;
    white-space: nowrap;
  }
  .check {
    width: 13px;
    height: 13px;
    box-sizing: border-box;
    border: 1px solid #8e8f8f;
    background: linear-gradient(135deg, #dcdcdc, #f6f6f6);
    box-shadow: inset 0 0 0 1px #f4f4f4;
    margin-right: 6px;
    flex: none;
  }
  .check.off {
    border-color: #bbb;
    background: #f0f0f0;
  }
  .psrc {
    display: flex;
    align-items: center;
    justify-content: flex-end;
    gap: 6px;
    height: 23px;
    position: relative;
    top: 1px;
  }
  .ssrc {
    width: 112px;
  }

  .mid {
    display: flex;
    gap: 8px;
    margin-top: 16px;
    height: 161px;
    flex: none;
  }
  .midleft {
    width: 252px;
    display: flex;
    flex-direction: column;
    justify-content: space-between;
  }
  .range {
    height: 69px;
    padding: 14px 6px 0;
  }
  .range .opt {
    height: 24px;
  }
  .content {
    height: 67px;
    padding: 14px 6px 0;
  }
  .opt {
    display: flex;
    align-items: center;
    height: 23px;
    white-space: nowrap;
  }
  .radio {
    width: 13px;
    height: 13px;
    border-radius: 50%;
    box-sizing: border-box;
    border: 1px solid #8f8f8f;
    background: radial-gradient(circle, #f6f6f6 0 2px, #cfcfcf 5px);
    margin-right: 6px;
    flex: none;
    position: relative;
  }
  .radio.on {
    background: radial-gradient(circle, #135a9a 0 3px, #dcdcdc 3.500px);
  }
  .radio.off {
    border-color: #c0c0c0;
    background: radial-gradient(circle, #f6f6f6 0 3px, #e4e4e4 5px);
  }
  .radio.on.off {
    background: radial-gradient(circle, #a0a0a0 0 3px, #ececec 3.500px);
  }
  .pageg {
    width: 50px;
  }
  .from {
    width: 35px;
  }
  .to {
    margin-left: 7px;
    width: 37px;
  }
  .spin {
    display: flex;
    width: 44px;
    height: 20px;
    background: #fff;
    box-sizing: border-box;
    border: 1px solid #e2e3ea;
    flex: none;
  }
  .spinval {
    flex: 1;
    padding-left: 3px;
    line-height: 18px;
    font-family: "Liberation Sans", sans-serif;
  }
  .spinbtns {
    width: 13px;
    display: flex;
    flex-direction: column;
    border-left: 1px solid #d8d8d8;
    background: #eee;
    gap: 1px;
  }
  .spinbtns b {
    flex: 1;
    border: 1px solid #b4b4b4;
    position: relative;
    background: #f4f4f4;
  }
  .spinbtns b::after {
    content: "";
    position: absolute;
    left: 2px;
    top: 2px;
    border-left: 3px solid transparent;
    border-right: 3px solid transparent;
  }
  .su::after {
    border-bottom: 3px solid #4d6185;
  }
  .sd::after {
    border-top: 3px solid #4d6185;
  }
  .selarea {
    width: 105px;
  }
  .copies {
    width: 199px;
    padding: 25px 0 0 21px;
  }
  .copyrow {
    display: flex;
    align-items: center;
    height: 20px;
    gap: 65px;
  }
  .copyrow .spin {
    width: 47px;
  }
  .collate {
    display: flex;
    gap: 7px;
    margin: 27px 0 0 6px;
  }
  .pages rect {
    fill: #fff;
    stroke: #4a4f5c;
  }
  .pages text {
    font: 10px "Liberation Sans", sans-serif;
    fill: #333;
  }
  .colcheck {
    margin: 22px 0 0 -4px;
  }

  .low {
    display: flex;
    gap: 8px;
    margin-top: 16px;
    height: 102px;
    flex: none;
  }
  .order {
    width: 207px;
    padding: 16px 6px 0;
    color: #a8a8a8;
    display: flex;
    justify-content: space-between;
  }
  .orderopts .opt {
    height: 26px;
  }
  .nup {
    width: 43px;
    height: 55px;
    margin: 10px 1px 0 0;
    box-sizing: border-box;
    border: 1px solid #c8c8c8;
    box-shadow: 1px 1px 0 #ddd;
    padding: 5px 4px;
    display: grid;
    grid-template-columns: 15px 15px;
    grid-auto-rows: 12px;
    gap: 3px;
    font: 8px/10px "Liberation Sans", sans-serif;
    text-align: center;
  }
  .nup span {
    border: 1px solid #ccc;
  }
  .scale {
    width: 244px;
    padding: 15px 5px 0 6px;
  }
  .srow {
    display: flex;
    align-items: center;
    justify-content: space-between;
    height: 23px;
    margin-bottom: 3px;
    white-space: nowrap;
  }
  .s2col {
    width: 135px;
    font-size: 12px;
  }
  .linecheck {
    color: #a8a8a8;
    margin-top: 11px;
  }
  .dfoot {
    display: flex;
    align-items: center;
    height: 30px;
    margin-top: 8px;
    padding-left: 3px;
  }
  .tips {
    color: #4f9cf5;
    margin-left: 6px;
  }
  .btn.ok, .btn.cancel {
    width: 76px;
    height: 30px;
    line-height: 28px;
  }
  .btn.ok {
    margin-left: auto;
  }
  .btn.cancel {
    margin-left: 9px;
  }
  .redbox {
    position: absolute;
    left: -1px;
    top: 317px;
    width: 236px;
    height: 54px;
    box-sizing: border-box;
    border: 3px solid #f33f3f;
    pointer-events: none;
  }
</style>
